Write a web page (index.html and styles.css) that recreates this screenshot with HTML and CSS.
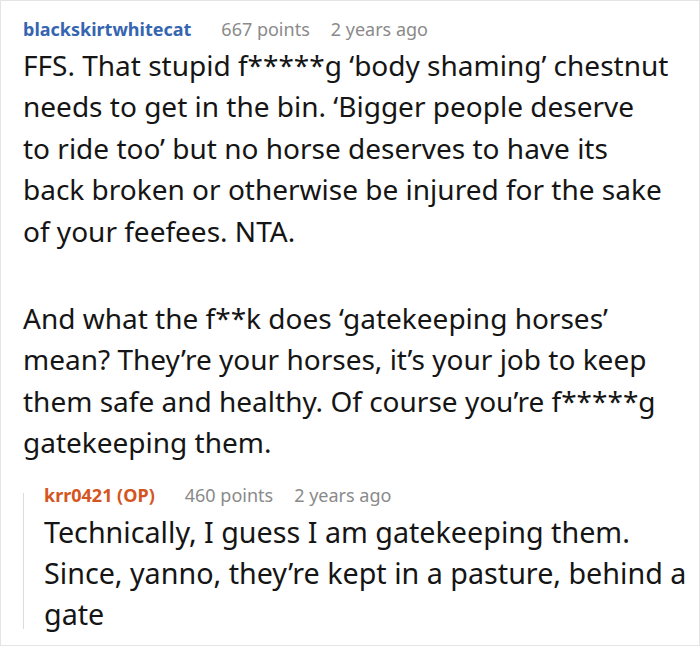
FILE: index.html
```html
<!DOCTYPE html>
<html>
<head>
<meta charset="utf-8">
<link rel="stylesheet" href="styles.css">
</head>
<body>
<div class="comment">
  <div class="meta">
    <span class="user">blackskirtwhitecat</span>
    <span class="info">667 points</span>
    <span class="info">2 years ago</span>
  </div>
  <div class="body">
    <p>FFS. That stupid f*****g ‘body shaming’ chestnut<br>needs to get in the bin. ‘Bigger people deserve<br>to ride too’ but no horse deserves to have its<br>back broken or otherwise be injured for the sake<br>of your feefees. NTA.</p>
    <p>And what the f**k does ‘gatekeeping horses’<br>mean? They’re your horses, it’s your job to keep<br>them safe and healthy. Of course you’re f*****g<br>gatekeeping them.</p>
  </div>
  <div class="reply">
    <div class="meta">
      <span class="user op">krr0421 (OP)</span>
      <span class="info">460 points</span>
      <span class="info">2 years ago</span>
    </div>
    <div class="reply-body">
      <p>Technically, I guess I am gatekeeping them.<br>Since, yanno, they’re kept in a pasture, behind a<br>gate</p>
    </div>
  </div>
</div>
</body>
</html>
```

FILE: styles.css
```css
html, body {
  margin: 0;
  padding: 0;
  background: #fff;
}
.comment {
  box-sizing: border-box;
  width: 700px;
  height: 646px;
  border: 1px solid #e4e4e4;
  padding: 16px 0 0 22px;
  font-family: "Noto Sans", "Open Sans", sans-serif;
  overflow: hidden;
}
.meta {
  display: flex;
  gap: 21px;
  font-size: 18px;
  line-height: 24px;
}
.user {
  font-weight: bold;
  color: #3565b0;
  margin-right: 9px;
}
.user.op {
  color: #d4551e;
}
.info {
  color: #8a8a8a;
}
.body {
  margin-top: 4px;
  font-size: 28px;
  line-height: 41.4px;
  color: #151515;
}
.body p {
  margin: 0 0 46px;
}
.body p:last-child {
  margin-bottom: 0;
}
.reply {
  position: relative;
  margin-top: 19px;
  padding-left: 21px;
}
.reply::before {
  content: "";
  position: absolute;
  left: 0;
  top: 10px;
  bottom: 5px;
  width: 1px;
  background: #dcdcdc;
}
.reply-body {
  margin-top: 4px;
  font-size: 28.7px;
  line-height: 41px;
  color: #151515;
}
.reply-body p {
  margin: 0;
  white-space: nowrap;
}
```
